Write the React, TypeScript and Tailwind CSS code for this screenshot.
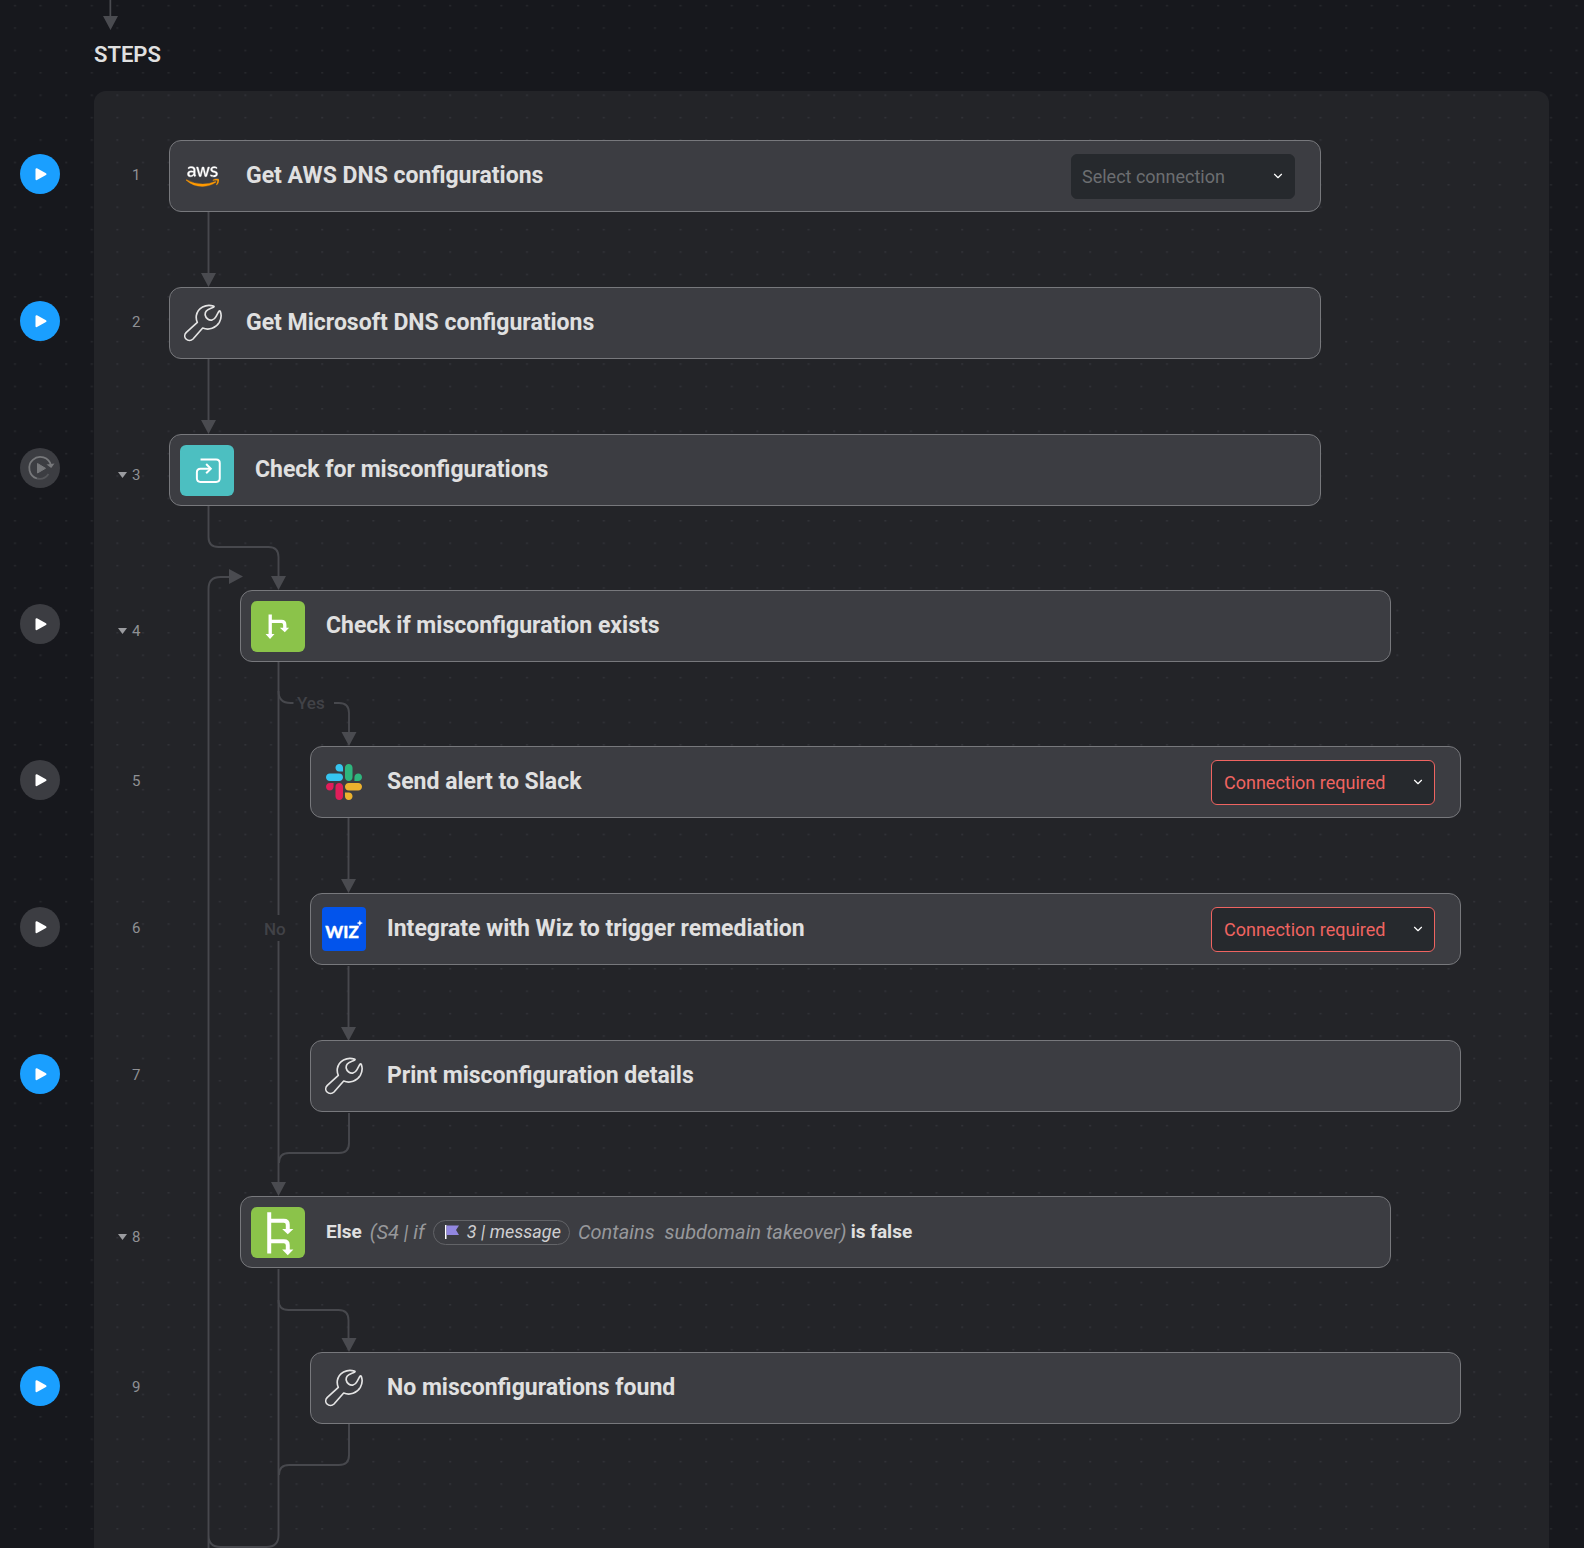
import type { ReactNode } from 'react'
import { ChevronDown } from 'lucide-react'
import { FaAws } from 'react-icons/fa'

type Step = {
  id: number
  level: 0 | 1 | 2
  icon: ReactNode
  title: ReactNode
  run?: 'ready' | 'idle' | 'loop'
  collapsible?: boolean
  connection?: 'select' | 'required'
}

const LEVELS = {
  0: 'mr-[228px]',
  1: 'ml-[71px] mr-[158px]',
  2: 'ml-[141px] mr-[88px]',
}

function AwsIcon() {
  return (
    <>
      <svg className="absolute w-0 h-0" aria-hidden="true">
        <linearGradient id="aws-fill" x1="0" y1="0" x2="0" y2="1">
          <stop offset="0.62" stopColor="#ffffff" />
          <stop offset="0.62" stopColor="#ff9900" />
        </linearGradient>
      </svg>
      <FaAws className="w-[33px] h-[27px]" fill="url(#aws-fill)" stroke="url(#aws-fill)" strokeWidth="6" />
    </>
  )
}

function WrenchIcon() {
  return (
    <svg className="w-[38px] h-[38px]" viewBox="0 0 114 114" fill="none" stroke="#e4e4e4" strokeWidth="5" strokeLinejoin="round" strokeLinecap="round">
      <path d="M88 6C66-1 41 11 37 35c-1 8 0 14 3 20L7 85c-6 6-6 15-1 20 6 6 15 6 21 0l29-33c19 8 40 0 50-17 6-11 7-22 3-32-1-3-3-3-5 0l-8 15c-6 11-17 13-25 7-8-6-10-16-4-24 5-6 12-7 21-11 3-2 3-3 0-4Z" />
    </svg>
  )
}

function SlackIcon() {
  return (
    <svg className="w-9 h-9" viewBox="0 0 122.8 122.8">
      <path fill="#e01e5a" d="M25.8 77.6c0 7.1-5.8 12.9-12.9 12.9S0 84.7 0 77.6s5.8-12.9 12.9-12.9h12.9v12.9zm6.5 0c0-7.1 5.8-12.9 12.9-12.9s12.9 5.8 12.9 12.9v32.3c0 7.1-5.8 12.9-12.9 12.9s-12.9-5.8-12.9-12.9V77.6z" />
      <path fill="#36c5f0" d="M45.2 25.8c-7.1 0-12.9-5.8-12.9-12.9S38.1 0 45.2 0s12.9 5.8 12.9 12.9v12.9H45.2zm0 6.5c7.1 0 12.9 5.8 12.9 12.9s-5.8 12.9-12.9 12.9H12.9C5.8 58.1 0 52.3 0 45.2s5.8-12.9 12.9-12.9h32.3z" />
      <path fill="#2eb67d" d="M97 45.2c0-7.1 5.8-12.9 12.9-12.9s12.9 5.8 12.9 12.9-5.8 12.9-12.9 12.9H97V45.2zm-6.5 0c0 7.1-5.8 12.9-12.9 12.9s-12.9-5.8-12.9-12.9V12.9C64.7 5.8 70.5 0 77.6 0s12.9 5.8 12.9 12.9v32.3z" />
      <path fill="#ecb22e" d="M77.6 97c7.1 0 12.9 5.8 12.9 12.9s-5.8 12.9-12.9 12.9-12.9-5.8-12.9-12.9V97h12.9zm0-6.5c-7.1 0-12.9-5.8-12.9-12.9s5.8-12.9 12.9-12.9h32.3c7.1 0 12.9 5.8 12.9 12.9s-5.8 12.9-12.9 12.9H77.6z" />
    </svg>
  )
}

function WizIcon() {
  return (
    <svg className="w-11 h-11 rounded bg-[#0254ec]" viewBox="0 0 44 44" fill="#ffffff">
      <text x="20" y="31" textAnchor="middle" fontFamily="Lato, sans-serif" fontWeight="900" fontSize="17" stroke="#ffffff" strokeWidth="0.300">WIZ</text>
      <path d="M37.800 13.400l.8 1.900 1.900.8-1.900.8-.8 1.900-.8-1.900-1.900-.8 1.900-.8z" stroke="#ffffff" strokeWidth="0.300" />
    </svg>
  )
}

function LoopIcon() {
  return (
    <svg className="w-[54px] h-[51px] rounded-md bg-[#4cbfc1]" viewBox="0 0 163 153" fill="none" stroke="#ffffff" strokeWidth="6">
      <path d="M62 43h47q11 0 11 11v46q0 11-11 11H62q-11 0-11-11V82q0-11 11-11h30" />
      <path d="M79 57l14 14-14 14" />
    </svg>
  )
}

function IfIcon() {
  return (
    <svg className="w-[54px] h-[51px] rounded-md bg-[#8bc34a]" viewBox="0 0 163 153" fill="none" stroke="#ffffff" strokeWidth="10">
      <path d="M58 40v61M58 61h34q10 0 10 11v10" />
      <path d="M44 99h27l-13.500 15zM87 80h28l-13 14z" fill="#ffffff" stroke="none" />
    </svg>
  )
}

function ElseIcon() {
  return (
    <svg className="w-[54px] h-[51px] rounded-md bg-[#8bc34a]" viewBox="0 0 163 153" fill="none" stroke="#ffffff" strokeWidth="12">
      <path d="M55 15v125M55 41h44q12 0 12 12v15M55 103h44q12 0 12 12v15" />
      <path d="M94 66h34l-17 16zM94 128h34l-17 17z" fill="#ffffff" stroke="none" />
    </svg>
  )
}

function RunButton({ id, kind }: { id: number; kind: Step['run'] }) {
  return (
    <button
      type="button"
      aria-label={`Run step ${id}`}
      className={`w-10 h-10 rounded-full flex items-center justify-center ${kind === 'ready' ? 'bg-[#1a9fff]' : 'bg-[#3c3d42]'}`}
    >
      {kind === 'loop' ? (
        <svg className="w-10 h-10" viewBox="0 0 40 40" fill="none">
          <path d="M31 17.500A11 11 0 1 0 17 30.500" stroke="#77787b" strokeWidth="1.800" />
          <path d="M17 30.500A11 11 0 0 0 28.500 26" stroke="#55565a" strokeWidth="1.800" />
          <path d="M26.500 16.500l4.700 3.500 3.300-4.600z" fill="#77787b" />
          <path d="M17.500 15.500v9.500l8-4.700z" fill="#77787b" stroke="#77787b" strokeLinejoin="round" />
        </svg>
      ) : (
        <svg className="w-10 h-10" viewBox="0 0 40 40" fill="#ffffff" stroke="#ffffff" strokeWidth="2" strokeLinejoin="round">
          <path d="M16.500 15.200v10l9-5z" />
        </svg>
      )}
    </button>
  )
}

function ConnectionSelect({ id, kind }: { id: number; kind: 'select' | 'required' }) {
  const required = kind === 'required'
  return (
    <div className="relative shrink-0">
      <select
        aria-label={`Connection for step ${id}`}
        className={`appearance-none block w-56 h-[45px] rounded-md bg-[#26292d] border pt-px pr-8 text-[18px] ${
          required ? 'border-[#ef6461] text-[#ef6461] pl-3' : 'border-[#26292d] text-[#6c6e71] pl-[10px]'
        }`}
      >
        <option>{required ? 'Connection required' : 'Select connection'}</option>
      </select>
      <ChevronDown className="absolute right-[10px] top-[15px] w-[14px] h-[14px] text-white pointer-events-none" />
    </div>
  )
}

function ElseTitle() {
  return (
    <span className="flex items-center text-[19px] whitespace-pre">
      <span>Else</span>
      <span className="ml-2 font-normal italic text-[20px] text-[#97989b]">(S4 | if</span>
      <span className="ml-2 h-[25px] pl-[11px] pr-2 pb-px flex items-center gap-2 rounded-full border border-[#626367] font-normal italic text-[18px] text-[#cfcfd1]">
        <svg className="w-[14px] h-[14px]" viewBox="0 0 14 14">
          <path d="M0 0h1.500v14H0z" fill="#ffffff" />
          <path d="M1.500 0.500H14l-3 4.500 3 5H1.500z" fill="#9287e0" />
        </svg>
        3 | message
      </span>
      <span className="ml-2 font-normal italic text-[20px] text-[#97989b]">Contains  subdomain takeover)</span>
      <span className="ml-1">is false</span>
    </span>
  )
}

const STEPS: Step[] = [
  { id: 1, level: 0, icon: <AwsIcon />, title: 'Get AWS DNS configurations', run: 'ready', connection: 'select' },
  { id: 2, level: 0, icon: <WrenchIcon />, title: 'Get Microsoft DNS configurations', run: 'ready' },
  { id: 3, level: 0, icon: <LoopIcon />, title: 'Check for misconfigurations', run: 'loop', collapsible: true },
  { id: 4, level: 1, icon: <IfIcon />, title: 'Check if misconfiguration exists', run: 'idle', collapsible: true },
  { id: 5, level: 2, icon: <SlackIcon />, title: 'Send alert to Slack', run: 'idle', connection: 'required' },
  { id: 6, level: 2, icon: <WizIcon />, title: 'Integrate with Wiz to trigger remediation', run: 'idle', connection: 'required' },
  { id: 7, level: 2, icon: <WrenchIcon />, title: 'Print misconfiguration details', run: 'ready' },
  { id: 8, level: 1, icon: <ElseIcon />, title: <ElseTitle />, collapsible: true },
  { id: 9, level: 2, icon: <WrenchIcon />, title: 'No misconfigurations found', run: 'ready' },
]

function StepRow({ step, spacing }: { step: Step; spacing: string }) {
  return (
    <li className={`flex items-center h-[72px] ${spacing}`}>
      <div className="-ml-[94px] w-[94px] pl-5 pb-1 shrink-0">
        {step.run && <RunButton id={step.id} kind={step.run} />}
      </div>
      <div className={`w-[75px] shrink-0 flex items-center text-[15px] leading-5 text-[#8f9094] ${step.collapsible ? 'pl-6 pt-[10px]' : 'pl-[38px] pb-[3px]'}`}>
        {step.collapsible ? (
          <button type="button" aria-label={`Collapse step ${step.id}`} className="flex items-center gap-[5px]">
            <svg className="w-[9px] h-[6px]" viewBox="0 0 9 6" fill="#9b9ca0">
              <path d="M0 0h9L4.500 6z" />
            </svg>
            <span>{step.id}</span>
          </button>
        ) : (
          <span>{step.id}</span>
        )}
      </div>
      <div className={`flex-1 min-w-0 h-full flex items-center rounded-xl border border-[#77787c] bg-[#3c3d42] pl-[10px] pr-[25px] ${LEVELS[step.level]}`}>
        <div className="min-w-[45px] shrink-0 flex items-center justify-center">{step.icon}</div>
        <h2 className="ml-[21px] flex-1 min-w-0 text-[23px] leading-8 font-bold text-[#e0e0e0]">{step.title}</h2>
        {step.connection && <ConnectionSelect id={step.id} kind={step.connection} />}
      </div>
    </li>
  )
}

// Edges between the cards, in panel coordinates
function Connectors() {
  return (
    <svg className="absolute left-0 top-0 w-full h-full pointer-events-none" aria-hidden="true">
      <g fill="none" stroke="#47484d" strokeWidth="1.900">
        <path d="M114.500 121v66M114.500 268v66" />
        <path d="M114.500 415v31q0 10 10 10h50q10 0 10 10v24" />
        <path d="M184.500 571v253M184.500 850v241" />
        <path d="M184.500 600q0 12 12 12h3M240 612h5q10 0 10 10v24" />
        <path d="M254.500 727v66M254.500 875v66" />
        <path d="M255 1022v30q0 10-10 10h-50q-10 0-10 10" />
        <path d="M184.500 1178v266q0 12-12 12h-46q-12 0-12-12M114.500 1457V498q0-12 12-12h10" />
        <path d="M184.500 1209q0 10 10 10h50q10 0 10 10v24" />
        <path d="M255 1333v31q0 10-10 10h-50q-10 0-10 10" />
      </g>
      <g fill="#4a4b50">
        <path d="M107 182h15l-7.500 14z" />
        <path d="M107 329h15l-7.500 14z" />
        <path d="M177 485h15l-7.500 14z" />
        <path d="M135 478v15l14-7.500z" />
        <path d="M247.500 641h15l-7.500 14z" />
        <path d="M247 788h15l-7.500 14z" />
        <path d="M247 936h15l-7.500 14z" />
        <path d="M177 1091h15l-7.500 14z" />
        <path d="M247.500 1247h15l-7.500 14z" />
      </g>
      <g fill="#414247" fontSize="17" fontWeight="500">
        <text x="203" y="618">Yes</text>
        <text x="170" y="844">No</text>
      </g>
    </svg>
  )
}

function DotGrid() {
  return (
    <svg className="absolute left-0 top-0 w-full h-full pointer-events-none" aria-hidden="true">
      <pattern id="dots" width="25.6" height="22.4" patternUnits="userSpaceOnUse">
        <rect x="14" y="5.2" width="2" height="1" fill="#303136" />
      </pattern>
      <rect width="100%" height="100%" fill="url(#dots)" />
    </svg>
  )
}

export default function App() {
  return (
    <main className="relative min-h-screen flex flex-col overflow-hidden bg-[#17181d] font-[Roboto,sans-serif]">
      <DotGrid />
      <header className="relative pl-[94px] pb-5">
        <svg className="ml-2 w-4 h-[30px]" viewBox="0 0 16 30" fill="#4a4b50" aria-hidden="true">
          <path d="M7.500 0h1.700v18H7.500zM1 16h15l-7.500 14z" />
        </svg>
        <h1 className="mt-[9px] text-[22px] leading-8 font-semibold text-[#e0e0e0]">STEPS</h1>
      </header>
      <section className="relative flex-1 ml-[94px] mr-[35px] pt-[49px] pb-[124px] rounded-t-xl bg-white/5">
        <Connectors />
        <ol className="relative">
          {STEPS.map((step, i) => {
            const prev = STEPS[i - 1]
            const spacing = !prev ? '' : prev.level === step.level ? 'mt-[75px]' : 'mt-[84px]'
            return <StepRow key={step.id} step={step} spacing={spacing} />
          })}
        </ol>
      </section>
    </main>
  )
}
